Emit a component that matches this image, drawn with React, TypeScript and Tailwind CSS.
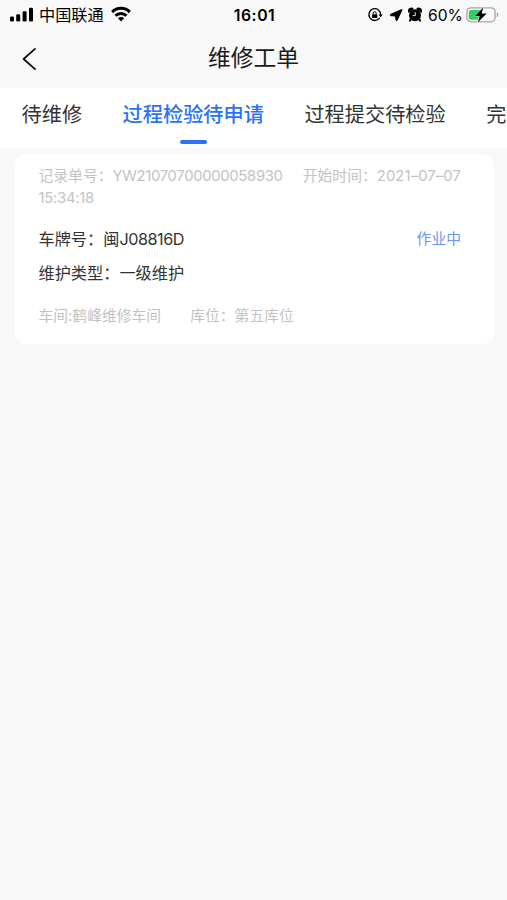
import React from "react";

function StatusBar() {
  return (
    <div className="flex h-[30px] items-center pl-[10px] pr-[8px] text-black">
      <div className="flex flex-1 items-center">
        <svg width="24" height="16" viewBox="0 0 24 16" fill="currentColor">
          <rect x="0" y="9.5" width="4" height="5" rx="1.3" />
          <rect x="6.2" y="7.2" width="4" height="7.3" rx="1.3" />
          <rect x="12.6" y="4.2" width="4" height="10.3" rx="1.3" />
          <rect x="19" y="0.8" width="4" height="13.7" rx="1.3" />
        </svg>
        <span className="ml-[5px] text-[16.2px] leading-[30px]">中国联通</span>
        <svg className="-mt-[2px] ml-[7px]" width="20" height="16" viewBox="0 0 20 16" fill="none" stroke="currentColor" strokeWidth="3">
          <path d="M1.2 6.1C6.1 1.1 13.9 1.1 18.8 6.1" />
          <path d="M4.5 9.7C7.6 6.6 12.4 6.6 15.5 9.7" />
          <path d="M10 15.4L6.9 12.2C8.6 10.6 11.4 10.6 13.1 12.2Z" fill="currentColor" stroke="none" />
        </svg>
      </div>
      <span className="text-[15.8px] font-semibold leading-[31px] tracking-[0.55px]">16:01</span>
      <div className="flex flex-1 items-center justify-end">
        <svg width="16" height="16" viewBox="0 0 16 16" fill="none" stroke="currentColor">
          <path d="M12.7 10.9A5.9 5.9 0 1 1 13.7 7.8" strokeWidth="1.3" />
          <path d="M11.5 7.4H15.8L13.6 10.2Z" fill="currentColor" stroke="none" />
          <rect x="5.1" y="7.3" width="5.2" height="3.8" rx="0.6" fill="currentColor" stroke="none" />
          <path d="M6.2 7.5V6.2a1.5 1.5 0 0 1 3 0v1.3" strokeWidth="1" />
        </svg>
        <svg className="ml-[6px]" width="14" height="16" viewBox="0 0 14 16" fill="currentColor" stroke="currentColor" strokeWidth="1" strokeLinejoin="round">
          <path d="M12.8 2.5L1.6 7.4C1 7.7 1.1 8.6 1.8 8.7L6.5 9L7 13C7.1 13.9 7.9 13.9 8.2 13.2L13 2.9C13.2 2.5 13 2.4 12.8 2.5Z" />
        </svg>
        <svg className="ml-[5px]" width="14" height="16" viewBox="0 0 14 16" fill="currentColor">
          <circle cx="7" cy="8.3" r="6" />
          <path d="M.6 6A2.8 2.8 0 0 1 5.9 1.9ZM13.4 6A2.8 2.8 0 0 0 8.1 1.9Z" />
          <path d="M3 11.8L2 13.6M11 11.8L12 13.6" stroke="currentColor" strokeWidth="2" strokeLinecap="round" />
          <path d="M7.3 5.2V8.6H4.6" fill="none" stroke="#f8f8f8" strokeWidth="0.9" />
        </svg>
        <span className="ml-[6px] text-[15.6px] leading-[31px] tracking-[0.1px]">60%</span>
        <svg className="ml-[3px]" width="33" height="18" viewBox="0 0 33 18">
          <rect x="0.9" y="1.8" width="28.2" height="14" rx="4.2" fill="none" stroke="#a5a5a5" strokeWidth="1.3" />
          <path d="M5 3.9H16L12 13.8H5A2.2 2.2 0 0 1 2.8 11.6V6.1A2.2 2.2 0 0 1 5 3.9Z" fill="#35cb5b" />
          <path d="M30.8 6.3C32.9 7.2 32.9 10.4 30.8 11.3Z" fill="#a5a5a5" />
          <path d="M17.2 1.4L9 9.9H13.6L11.8 16.4L20.6 7.6H15.7Z" fill="#000" stroke="#f8f8f8" strokeWidth="0.8" paintOrder="stroke" />
        </svg>
      </div>
    </div>
  );
}

function Header() {
  return (
    <header className="flex h-[58px] items-center">
      <button className="flex w-[60px] pl-[21px]" aria-label="返回">
        <svg width="16" height="24" viewBox="0 0 16 24" fill="none" stroke="#111" strokeWidth="1.8" strokeLinecap="round" strokeLinejoin="round">
          <path d="M14 1.8L2.6 12L14 22.2" />
        </svg>
      </button>
      <h1 className="flex-1 pb-[3px] text-center text-[22.8px] leading-[34px] text-[#1a1a1a]">维修工单</h1>
      <div className="w-[60px]" />
    </header>
  );
}

function Tabs() {
  return (
    <nav className="flex h-[60px] gap-[40.5px] overflow-hidden whitespace-nowrap bg-white pl-[21.5px] text-[20.2px] leading-[30px] text-[#333]">
      <span className="shrink-0 pt-[12px]">待维修</span>
      <div className="flex shrink-0 flex-col items-center pt-[12px] font-medium text-[#2b72f6]">
        <span>过程检验待申请</span>
        <div className="mt-[10px] h-[4px] w-[27px] rounded-full bg-[#2b72f6]" />
      </div>
      <span className="shrink-0 pt-[12px]">过程提交待检验</span>
      <span className="shrink-0 pt-[12px]">完</span>
    </nav>
  );
}

function OrderCard() {
  return (
    <article className="ml-[15px] mr-[13px] mt-[6px] h-[190px] rounded-[12px] bg-white pl-[23.5px] pr-[33px] pt-[11px]">
      <div className="text-[14.8px] leading-[22px] text-[#c3c3c3]">
        <div className="flex whitespace-nowrap">
          <span>记录单号：</span>
          <span className="tracking-[-0.3px]">YW21070700000058930</span>
          <span className="ml-auto">开始时间：</span>
          <span className="tracking-[0.12px]">2021–07–07</span>
        </div>
        <div className="tracking-[-0.25px]">15:34:18</div>
      </div>
      <div className="mt-[18px] flex items-center justify-between leading-[24px]">
        <span className="text-[16.2px] text-[#333]">
          车牌号：闽<span className="tracking-[-0.45px]">J08816D</span>
        </span>
        <span className="text-[14.8px] text-[#6b93f5]">作业中</span>
      </div>
      <div className="mt-[10px] text-[16.2px] leading-[24px] text-[#333]">维护类型：一级维护</div>
      <div className="mt-[20px] flex gap-[29px] text-[14.8px] leading-[22px] text-[#c3c3c3]">
        <span>车间:鹤峰维修车间</span>
        <span>库位：第五库位</span>
      </div>
    </article>
  );
}

export default function App() {
  return (
    <main className="h-[900px] w-[507px] overflow-hidden bg-[#f8f8f8] font-['Inter','Noto_Sans_CJK_SC',sans-serif]">
      <StatusBar />
      <Header />
      <Tabs />
      <OrderCard />
    </main>
  );
}
